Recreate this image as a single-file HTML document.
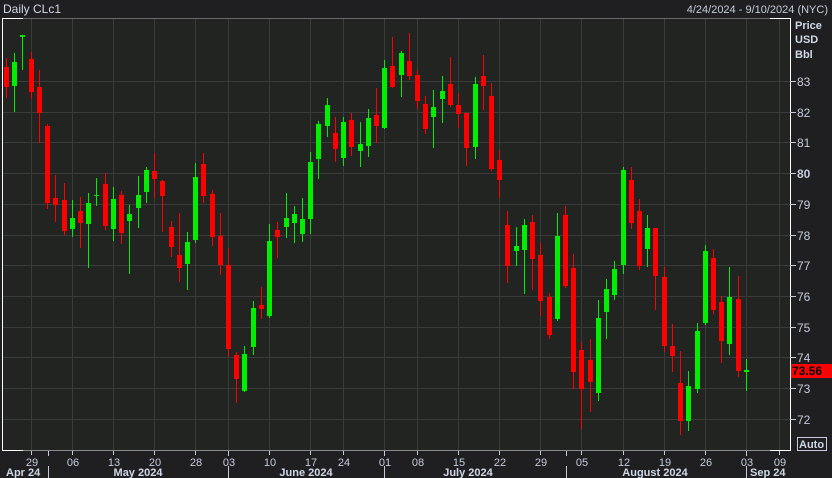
<!DOCTYPE html>
<html><head><meta charset="utf-8"><style>
html,body{margin:0;padding:0;background:#1f1f21;width:832px;height:478px;overflow:hidden;font-family:"Liberation Sans",sans-serif;}
svg{display:block}
text{font-family:"Liberation Sans",sans-serif;fill:#c4ccdc;font-size:11px}
</style></head><body>
<svg id="s" width="832" height="478" viewBox="0 0 832 478" xmlns="http://www.w3.org/2000/svg">
<rect x="0" y="0" width="832" height="478" fill="#1f1f21"/>
<rect x="3" y="18" width="787" height="432" fill="#222421"/>
<g id="grid" stroke="#3a3b3a" stroke-width="1"></g>
<line x1="3" y1="18.5" x2="790" y2="18.5" stroke="#6a6a6a"/>
<line x1="3" y1="450.5" x2="790" y2="450.5" stroke="#8a8a8a"/>
<line x1="2.5" y1="18" x2="2.5" y2="451" stroke="#fff"/>
<line x1="2" y1="18.5" x2="23" y2="18.5" stroke="#fff"/>
<line x1="2" y1="450.5" x2="23" y2="450.5" stroke="#fff"/>
<line x1="790.5" y1="18" x2="790.5" y2="451" stroke="#fff"/>
<line x1="770" y1="18.5" x2="791" y2="18.5" stroke="#fff"/>
<line x1="770" y1="450.5" x2="791" y2="450.5" stroke="#fff"/>
<g id="c"></g>
<text x="3" y="13" font-size="12" style="font-size:12px;fill:#d0d8e8">Daily CLc1</text>
<text x="828" y="13" text-anchor="end" style="fill:#c4ccdc">4/24/2024 - 9/10/2024 (NYC)</text>
<text x="795" y="29" style="font-weight:bold;fill:#d0d8e8">Price</text>
<text x="795" y="43" style="font-weight:bold;fill:#d0d8e8">USD</text>
<text x="795" y="58" style="font-weight:bold;fill:#d0d8e8">Bbl</text>
<g id="py"></g>
<rect x="791" y="364" width="41" height="14" fill="#ff0000"/>
<text x="792" y="375" style="font-weight:bold;fill:#000;font-size:12px">73.56</text>
<rect x="797.5" y="437.5" width="29" height="13" fill="none" stroke="#c4ccdc"/>
<text x="799" y="448" style="font-weight:bold;fill:#d0d8e8">Auto</text>
<g id="xa"></g>
<text x="6" y="476" style="font-weight:bold;fill:#d0d8e8">Apr 24</text>
<text x="138" y="476" text-anchor="middle" style="font-weight:bold;fill:#d0d8e8">May 2024</text>
<text x="306" y="476" text-anchor="middle" style="font-weight:bold;fill:#d0d8e8">June 2024</text>
<text x="468" y="476" text-anchor="middle" style="font-weight:bold;fill:#d0d8e8">July 2024</text>
<text x="655" y="476" text-anchor="middle" style="font-weight:bold;fill:#d0d8e8">August 2024</text>
<text x="750" y="476" style="font-weight:bold;fill:#d0d8e8">Sep 24</text>
</svg>
<script>
var NS="http://www.w3.org/2000/svg";
function el(p,t,a,txt){var e=document.createElementNS(NS,t);for(var k in a)e.setAttribute(k,a[k]);if(txt)e.textContent=txt;document.getElementById(p).appendChild(e);return e;}
var vx=[31,72,113,154,195,228,269,310,343,384,417,458,499,540,581,623,664,705,746,779];
var vl=["29","06","13","20","28","03","10","17","24","01","08","15","22","29","05","12","19","26","03","09"];
vx.forEach(function(x,i){el("grid","line",{x1:x+.5,y1:19,x2:x+.5,y2:450});
el("xa","line",{x1:x+.5,y1:451,x2:x+.5,y2:455,stroke:"#c4ccdc"});
el("xa","text",{x:x+1,y:466,"text-anchor":"middle"},vl[i]);});
[48,228,384,566,746].forEach(function(x){el("xa","line",{x1:x+.5,y1:451,x2:x+.5,y2:456,stroke:"#c4ccdc"});el("xa","line",{x1:x+.5,y1:466,x2:x+.5,y2:478,stroke:"#c4ccdc"});});
for(var p=83;p>=72;p--){var y=Math.round(81+(83-p)*30.7);
el("grid","line",{x1:3,y1:y+.5,x2:790,y2:y+.5});
el("py","line",{x1:790,y1:y+.5,x2:796,y2:y+.5,stroke:"#c4ccdc"});
el("py","text",{x:797,y:y+5,style:(p==80?"font-weight:bold;":"")+"font-size:12px"},String(p));}
var R=[[6,58,98,67,87],[31,52,99,59,92],[39,70,143,87,113],[47,124,209,126,203],[55,175,222,198,205],[64,183,235,200,231],[80,197,248,211,223],[105,173,230,184,226],[121,191,244,195,233],[154,153,198,171,179],[162,180,232,181,196],[171,221,257,227,247],[179,213,282,255,268],[203,153,203,164,196],[212,190,246,194,237],[220,213,275,236,265],[228,248,357,265,349],[236,352,403,355,379],[261,287,319,305,309],[277,222,258,230,237],[335,117,162,133,149],[351,113,156,120,147],[376,88,143,115,126],[392,37,88,66,87],[409,33,80,61,76],[417,70,109,75,101],[425,96,134,104,129],[450,57,107,84,105],[458,93,128,105,114],[466,113,166,113,148],[483,55,110,76,86],[491,83,171,96,169],[499,150,198,160,180],[507,211,283,225,266],[532,215,290,222,259],[540,243,316,255,301],[549,293,339,297,335],[565,206,288,215,286],[573,254,389,268,372],[581,342,429,350,389],[590,339,412,360,382],[631,167,229,180,223],[639,199,270,211,266],[655,228,310,228,276],[664,267,352,277,346],[672,324,372,346,356],[680,351,435,383,421],[713,249,314,258,310],[721,296,363,302,341],[738,276,377,299,371]];
var G=[[14,53,112,62,86],[22,35,70,35,37],[72,200,237,218,229],[88,193,268,203,224],[96,178,206,195,196],[113,187,241,199,229],[129,205,274,214,221],[138,176,228,195,208],[146,167,203,170,192],[187,232,290,242,264],[195,163,243,177,240],[244,346,392,354,391],[253,301,355,308,347],[269,224,318,241,316],[286,193,238,218,227],[294,206,243,214,223],[302,198,242,219,234],[310,152,234,162,219],[318,121,179,124,159],[327,98,137,105,126],[343,117,166,122,158],[360,122,167,144,151],[368,109,157,118,146],[384,60,129,68,128],[401,51,97,53,75],[433,90,148,107,117],[442,76,123,91,99],[475,77,159,84,147],[516,227,266,246,251],[524,219,294,225,250],[557,213,321,236,319],[598,300,401,318,393],[606,279,339,289,312],[614,261,300,269,295],[623,167,274,170,265],[647,215,267,228,249],[688,371,431,386,421],[697,323,393,331,389],[705,245,325,251,323],[729,267,355,297,344],[746,359,391,370,372]];
function draw(a,col){a.forEach(function(d){el("c","rect",{x:d[0],y:d[1],width:1,height:d[2]-d[1],fill:col});
el("c","rect",{x:d[0]-2,y:d[3],width:5,height:Math.max(1,d[4]-d[3]),fill:col});});}
draw(R,"#ff0000");draw(G,"#00ee00");
</script>
</body></html>
